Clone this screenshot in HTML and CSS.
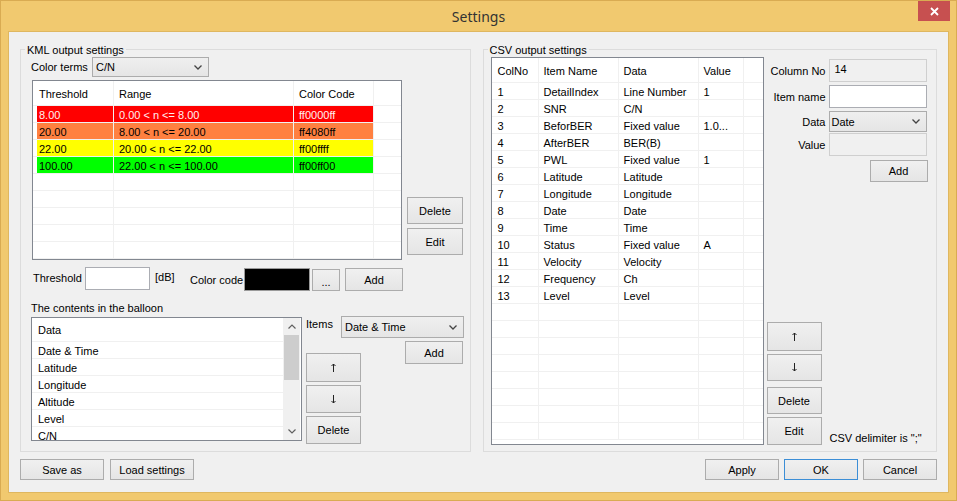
FILE: index.html
```html
<!DOCTYPE html>
<html>
<head>
<meta charset="utf-8">
<title>Settings</title>
<link rel="stylesheet" href="styles.css">
</head>
<body>
<div class="window">
  <div class="titlebar">
    <span class="title">Settings</span>
    <div class="close"><svg width="9" height="9" viewBox="0 0 9 9"><path d="M1 1 L8 8 M8 1 L1 8" stroke="#fff" stroke-width="1.8"/></svg></div>
  </div>
  <div class="client">
    <div class="groups">
      <div class="group kml">
        <span class="caption">KML output settings</span>
        <div class="row-terms">
          <span class="lbl-terms">Color terms</span>
          <div class="combo combo-terms"><span>C/N</span><svg class="chev" width="8" height="5" viewBox="0 0 8 5"><path d="M0.5 0.5 L4 4 L7.5 0.5" fill="none" stroke="#444" stroke-width="1.3"/></svg></div>
        </div>
        <div class="row-table">
          <div class="gridbox kml-grid">
            <div class="grow head"><div class="c k0"></div><div class="c k1">Threshold</div><div class="c k2">Range</div><div class="c k3">Color Code</div><div class="c k4"></div></div>
            <div class="grow"><div class="c k0"></div><div class="c k1 red">8.00</div><div class="c k2 red">0.00 &lt; n &lt;= 8.00</div><div class="c k3 red">ff0000ff</div><div class="c k4"></div></div>
            <div class="grow"><div class="c k0"></div><div class="c k1 orange">20.00</div><div class="c k2 orange">8.00 &lt; n &lt;= 20.00</div><div class="c k3 orange">ff4080ff</div><div class="c k4"></div></div>
            <div class="grow"><div class="c k0"></div><div class="c k1 yellow">22.00</div><div class="c k2 yellow">20.00 &lt; n &lt;= 22.00</div><div class="c k3 yellow">ff00ffff</div><div class="c k4"></div></div>
            <div class="grow"><div class="c k0"></div><div class="c k1 green">100.00</div><div class="c k2 green">22.00 &lt; n &lt;= 100.00</div><div class="c k3 green">ff00ff00</div><div class="c k4"></div></div>
            <div class="grow"><div class="c k0"></div><div class="c k1"></div><div class="c k2"></div><div class="c k3"></div><div class="c k4"></div></div>
            <div class="grow"><div class="c k0"></div><div class="c k1"></div><div class="c k2"></div><div class="c k3"></div><div class="c k4"></div></div>
            <div class="grow"><div class="c k0"></div><div class="c k1"></div><div class="c k2"></div><div class="c k3"></div><div class="c k4"></div></div>
            <div class="grow"><div class="c k0"></div><div class="c k1"></div><div class="c k2"></div><div class="c k3"></div><div class="c k4"></div></div>
            <div class="grow"><div class="c k0"></div><div class="c k1"></div><div class="c k2"></div><div class="c k3"></div><div class="c k4"></div></div>
          </div>
          <div class="kml-btns">
            <div class="btn btn-del">Delete</div>
            <div class="btn btn-edit">Edit</div>
          </div>
        </div>
        <div class="row-threshold">
          <span class="lbl-thr">Threshold</span>
          <div class="textbox tb-thr"></div>
          <span class="lbl-db">[dB]</span>
          <span class="lbl-cc">Color code</span>
          <div class="swatch"></div>
          <div class="btn btn-dots">...</div>
          <div class="btn btn-add1">Add</div>
        </div>
        <div class="lbl-balloon">The contents in the balloon</div>
        <div class="row-balloon">
          <div class="listbox">
            <div class="list-body">
              <div class="lrow lhead">Data</div>
              <div class="lrow">Date &amp; Time</div>
              <div class="lrow">Latitude</div>
              <div class="lrow">Longitude</div>
              <div class="lrow">Altitude</div>
              <div class="lrow">Level</div>
              <div class="lrow">C/N</div>
            </div>
            <div class="vscroll">
              <div class="sarrow"><svg width="8" height="5" viewBox="0 0 8 5"><path d="M0.5 4.5 L4 1 L7.5 4.5" fill="none" stroke="#606060" stroke-width="1.2"/></svg></div>
              <div class="strack"><div class="sthumb"></div></div>
              <div class="sarrow"><svg width="8" height="5" viewBox="0 0 8 5"><path d="M0.5 0.5 L4 4 L7.5 0.5" fill="none" stroke="#606060" stroke-width="1.2"/></svg></div>
            </div>
          </div>
          <div class="balloon-ctrl">
            <div class="items-row">
              <span class="lbl-items">Items</span>
              <div class="combo combo-items"><span>Date &amp; Time</span><svg class="chev" width="8" height="5" viewBox="0 0 8 5"><path d="M0.5 0.5 L4 4 L7.5 0.5" fill="none" stroke="#444" stroke-width="1.3"/></svg></div>
            </div>
            <div class="balloon-lower">
              <div class="move-col">
                <div class="btn b-up"><svg width="5" height="9" viewBox="0 0 5 9"><path d="M2.5 1 V9 M0.5 3 L2.5 1 L4.5 3" fill="none" stroke="#222" stroke-width="1"/></svg></div>
                <div class="btn b-down"><svg width="5" height="9" viewBox="0 0 5 9"><path d="M2.5 0 V8 M0.5 6 L2.5 8 L4.5 6" fill="none" stroke="#222" stroke-width="1"/></svg></div>
                <div class="btn b-del2">Delete</div>
              </div>
              <div class="btn btn-add2">Add</div>
            </div>
          </div>
        </div>
      </div>

      <div class="group csv">
        <span class="caption">CSV output settings</span>
        <div class="csv-body">
          <div class="gridbox csv-grid">
            <div class="grow head"><div class="c s1">ColNo</div><div class="c s2">Item Name</div><div class="c s3">Data</div><div class="c s4">Value</div><div class="c s5"></div></div>
            <div class="grow"><div class="c s1">1</div><div class="c s2">DetailIndex</div><div class="c s3">Line Number</div><div class="c s4">1</div><div class="c s5"></div></div>
            <div class="grow"><div class="c s1">2</div><div class="c s2">SNR</div><div class="c s3">C/N</div><div class="c s4"></div><div class="c s5"></div></div>
            <div class="grow"><div class="c s1">3</div><div class="c s2">BeforBER</div><div class="c s3">Fixed value</div><div class="c s4">1.0...</div><div class="c s5"></div></div>
            <div class="grow"><div class="c s1">4</div><div class="c s2">AfterBER</div><div class="c s3">BER(B)</div><div class="c s4"></div><div class="c s5"></div></div>
            <div class="grow"><div class="c s1">5</div><div class="c s2">PWL</div><div class="c s3">Fixed value</div><div class="c s4">1</div><div class="c s5"></div></div>
            <div class="grow"><div class="c s1">6</div><div class="c s2">Latitude</div><div class="c s3">Latitude</div><div class="c s4"></div><div class="c s5"></div></div>
            <div class="grow"><div class="c s1">7</div><div class="c s2">Longitude</div><div class="c s3">Longitude</div><div class="c s4"></div><div class="c s5"></div></div>
            <div class="grow"><div class="c s1">8</div><div class="c s2">Date</div><div class="c s3">Date</div><div class="c s4"></div><div class="c s5"></div></div>
            <div class="grow"><div class="c s1">9</div><div class="c s2">Time</div><div class="c s3">Time</div><div class="c s4"></div><div class="c s5"></div></div>
            <div class="grow"><div class="c s1">10</div><div class="c s2">Status</div><div class="c s3">Fixed value</div><div class="c s4">A</div><div class="c s5"></div></div>
            <div class="grow"><div class="c s1">11</div><div class="c s2">Velocity</div><div class="c s3">Velocity</div><div class="c s4"></div><div class="c s5"></div></div>
            <div class="grow"><div class="c s1">12</div><div class="c s2">Frequency</div><div class="c s3">Ch</div><div class="c s4"></div><div class="c s5"></div></div>
            <div class="grow"><div class="c s1">13</div><div class="c s2">Level</div><div class="c s3">Level</div><div class="c s4"></div><div class="c s5"></div></div>
            <div class="grow"><div class="c s1"></div><div class="c s2"></div><div class="c s3"></div><div class="c s4"></div><div class="c s5"></div></div>
            <div class="grow"><div class="c s1"></div><div class="c s2"></div><div class="c s3"></div><div class="c s4"></div><div class="c s5"></div></div>
            <div class="grow"><div class="c s1"></div><div class="c s2"></div><div class="c s3"></div><div class="c s4"></div><div class="c s5"></div></div>
            <div class="grow"><div class="c s1"></div><div class="c s2"></div><div class="c s3"></div><div class="c s4"></div><div class="c s5"></div></div>
            <div class="grow"><div class="c s1"></div><div class="c s2"></div><div class="c s3"></div><div class="c s4"></div><div class="c s5"></div></div>
            <div class="grow"><div class="c s1"></div><div class="c s2"></div><div class="c s3"></div><div class="c s4"></div><div class="c s5"></div></div>
            <div class="grow"><div class="c s1"></div><div class="c s2"></div><div class="c s3"></div><div class="c s4"></div><div class="c s5"></div></div>
            <div class="grow"><div class="c s1"></div><div class="c s2"></div><div class="c s3"></div><div class="c s4"></div><div class="c s5"></div></div>
          </div>
          <div class="csv-side">
            <div class="csv-form">
              <span class="flbl f1">Column No</span><div class="textbox disabled f1"><span>14</span></div>
              <span class="flbl f2">Item name</span><div class="textbox f2"></div>
              <span class="flbl f3">Data</span><div class="combo combo-data f3"><span>Date</span><svg class="chev" width="8" height="5" viewBox="0 0 8 5"><path d="M0.5 0.5 L4 4 L7.5 0.5" fill="none" stroke="#444" stroke-width="1.3"/></svg></div>
              <span class="flbl f4">Value</span><div class="textbox disabled f4"></div>
              <div class="btn btn-add3">Add</div>
            </div>
            <div class="csv-bottom">
              <div class="move-col csv-move">
                <div class="btn c-up"><svg width="5" height="9" viewBox="0 0 5 9"><path d="M2.5 1 V9 M0.5 3 L2.5 1 L4.5 3" fill="none" stroke="#222" stroke-width="1"/></svg></div>
                <div class="btn c-down"><svg width="5" height="9" viewBox="0 0 5 9"><path d="M2.5 0 V8 M0.5 6 L2.5 8 L4.5 6" fill="none" stroke="#222" stroke-width="1"/></svg></div>
                <div class="btn c-del">Delete</div>
                <div class="btn c-edit">Edit</div>
              </div>
              <span class="delim">CSV delimiter is ";"</span>
            </div>
          </div>
        </div>
      </div>
    </div>
    <div class="footer">
      <div class="btn fb">Save as</div>
      <div class="btn fb">Load settings</div>
      <div class="spacer"></div>
      <div class="btn fb2">Apply</div>
      <div class="btn fb2 ok">OK</div>
      <div class="btn fb2">Cancel</div>
    </div>
  </div>
</div>
</body>
</html>
```

FILE: styles.css
```css
* { box-sizing: border-box; }
html, body { margin: 0; padding: 0; }
body {
  width: 957px; height: 501px; overflow: hidden;
  font-family: "Liberation Sans", Arial, sans-serif;
  font-size: 11px; color: #000;
  background: #f1c96f;
}
.window {
  width: 957px; height: 501px;
  border: 1px solid #d9ab52;
  background: #f1c96f;
  display: flex; flex-direction: column;
}
.titlebar {
  height: 30px; position: relative;
  display: flex; align-items: center; justify-content: center;
}
.title {
  font-family: "Noto Sans", "Open Sans", sans-serif;
  font-size: 14px; color: #333; margin-top: 1px;
}
.close {
  position: absolute; right: 6px; top: 0;
  width: 32px; height: 20px; background: #c75050;
  display: flex; align-items: center; justify-content: center;
}
.client {
  margin: 0 7px; height: 462px;
  background: #f0f0f0;
  border: 1px solid #dfb760;
  padding: 17px 11px 0 11px;
}
.groups { display: flex; gap: 12px; height: 403px; }
.group {
  position: relative;
  border: 1px solid #dcdcdc;
  height: 403px;
}
.kml { width: 451px; }
.csv { width: 455px; }
.caption {
  position: absolute; left: 4px; top: -7px;
  padding: 0 2px; background: #f0f0f0; line-height: 14px;
}

/* generic controls */
.btn {
  border: 1px solid #acacac;
  background: linear-gradient(#f0f0f0, #e5e5e5);
  display: flex; align-items: center; justify-content: center;
}
.textbox { border: 1px solid #abadb3; background: #fff; }
.textbox.disabled { background: #f0f0f0; border-color: #cfcfcf; }
.combo {
  border: 1px solid #acacac;
  background: linear-gradient(#efefef, #e5e5e5);
  display: flex; align-items: center; justify-content: space-between;
  padding: 0 6px 0 3px;
}

/* KML */
.row-terms { display: flex; align-items: center; height: 20px; margin: 7px 0 0 10px; }
.lbl-terms { width: 61px; }
.combo-terms { width: 117px; height: 20px; }
.row-table { display: flex; margin: 3px 0 0 11px; }
.gridbox {
  border: 1px solid #828790; background: #fff; overflow: hidden;
}
.kml-grid { width: 370px; height: 180px; }
.grow { display: flex; height: 17px; }
.grow.head { height: 25px; }
.c {
  height: 100%;
  border-right: 1px solid #f0f0f0;
  border-bottom: 1px solid #f0f0f0;
  padding-left: 5px; padding-top: 1px;
  display: flex; align-items: center;
  white-space: nowrap; overflow: hidden;
}
.k0 { width: 4px; border-right: none; padding: 0; }
.k1 { width: 77px; padding-left: 2px; }
.k2 { width: 180px; }
.k3 { width: 80px; }
.k4 { width: 27px; border-right: none; }
.red { background: #ff0000; color: #fff0f0; }
.orange { background: #ff8040; }
.yellow { background: #ffff00; }
.green { background: #00ff00; }
.kml-btns {
  display: flex; flex-direction: column; justify-content: flex-end; gap: 4px;
  margin-left: 5px; padding-bottom: 5px;
}
.kml-btns .btn { width: 56px; height: 27px; }

.row-threshold { display: flex; align-items: flex-start; height: 24px; margin: 7px 0 0 12px; }
.lbl-thr { width: 52px; margin-top: 5px; line-height: 13px; }
.tb-thr { width: 65px; height: 23px; }
.lbl-db { width: 35px; margin: 4px 0 0 5px; line-height: 13px; }
.lbl-cc { width: 54px; margin-top: 7px; line-height: 13px; }
.swatch { width: 66px; height: 23px; margin-top: 1px; background: #000; border: 1px solid #9a9a9a; }
.btn-dots { width: 28px; height: 22px; margin: 2px 0 0 2px; padding-top: 3px; }
.btn-add1 { width: 58px; height: 23px; margin: 1px 0 0 5px; }

.lbl-balloon { margin: 11px 0 0 10px; line-height: 13px; }
.row-balloon { display: flex; margin: 1px 0 0 10px; }
.listbox {
  width: 271px; height: 124px; margin-top: 1px;
  border: 1px solid #828790; background: #fff;
  display: flex; overflow: hidden;
}
.list-body { width: 251px; }
.lrow {
  height: 17px; border-bottom: 1px solid #f0f0f0;
  padding-left: 6px; padding-top: 1px; display: flex; align-items: center; white-space: nowrap;
}
.lrow.lhead { height: 24px; }
.vscroll { width: 17px; display: flex; flex-direction: column; background: #f0f0f0; }
.sarrow { height: 17px; display: flex; align-items: center; justify-content: center; }
.strack { flex: 1; padding: 0 1px; }
.sthumb { height: 45px; background: #cdcdcd; }

.balloon-ctrl { width: 158px; margin-left: 4px; }
.items-row { display: flex; align-items: flex-start; height: 22px; }
.lbl-items { width: 35px; margin-top: 2px; line-height: 13px; }
.combo-items { width: 123px; height: 22px; }
.balloon-lower { display: flex; justify-content: space-between; }
.move-col { display: flex; flex-direction: column; gap: 3px; }
.move-col .btn { width: 55px; }
.balloon-lower .move-col { margin-top: 15px; }
.b-up { height: 29px; }
.b-down { height: 28px; }
.b-del2 { height: 28px; }
.btn-add2 { width: 58px; height: 23px; margin: 3px 1px 0 0; }

/* CSV */
.csv-body { display: flex; padding: 7px 0 0 7px; }
.csv-grid { width: 273px; height: 388px; }
.s1 { width: 47px; padding-left: 6px; }
.s2 { width: 80px; }
.s3 { width: 80px; }
.s4 { width: 45px; }
.s5 { width: 19px; border-right: none; }
.csv-side {
  width: 160px; height: 388px; margin-left: 3px;
  display: flex; flex-direction: column; justify-content: space-between;
}
.csv-form {
  display: grid; grid-template-columns: 59px 98px; column-gap: 3px;
  padding-top: 2px; align-items: center;
}
.flbl { text-align: right; }
.csv-form .textbox, .csv-form .combo { width: 98px; }
.f1.textbox { height: 23px; padding-left: 5px; display: flex; align-items: center; padding-bottom: 4px; }
.f2.textbox { height: 23px; margin-top: 3px; }
.f2.flbl { margin-top: 3px; }
.f3.combo { height: 21px; margin-top: 3px; padding-left: 2px; }
.f3.flbl { margin-top: 3px; }
.f4.textbox { height: 23px; margin-top: 1px; }
.f4.flbl { margin-top: 1px; }
.btn-add3 { grid-column: 2; justify-self: end; width: 58px; height: 22px; margin: 4px -1px 0 0; }
.csv-bottom { display: flex; align-items: flex-end; }
.c-up { height: 29px; }
.c-down { height: 27px; }
.c-del { height: 27px; margin-top: 3px; }
.c-edit { height: 28px; }
.csv-move { gap: 3px; }
.delim { margin-left: 8px; line-height: 13px; margin-bottom: 0; white-space: nowrap; }

/* footer */
.footer { display: flex; height: 21px; margin-top: 7px; }
.fb { width: 84px; margin-right: 6px; }
.spacer { flex: 1; }
.fb2 { width: 74px; margin-left: 5px; }
.ok { border-color: #3c8ed6; }
```
